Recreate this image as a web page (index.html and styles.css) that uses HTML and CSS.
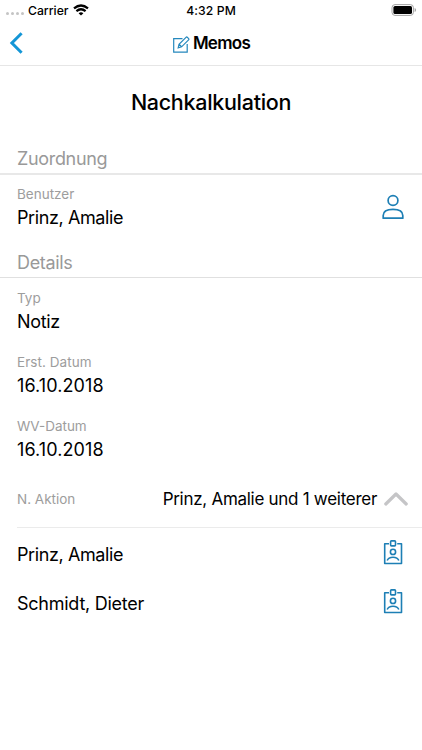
FILE: index.html
```
<!DOCTYPE html>
<html lang="de">
<head>
<meta charset="utf-8">
<title>Memos</title>
<link rel="stylesheet" href="styles.css">
</head>
<body>
<div class="status">
  <div class="carrier">
    <span class="dots"><i></i><i></i><i></i><i></i></span>
    <span class="carrier-name">Carrier</span>
    <svg class="wifi" width="16" height="12" viewBox="0 0 16 12" fill="none" stroke="#000" stroke-width="2.3"><path d="M1 4.3Q8-1.4 15 4.3"/><path d="M3.4 7.1Q8 3.5 12.6 7.1"/><path d="M8 11.6L5.6 9.2Q8 7.2 10.4 9.2Z" fill="#000" stroke="none"/></svg>
  </div>
  <span class="time">4:32 PM</span>
  <svg class="battery" width="26" height="12" viewBox="0 0 26 12"><rect x="1" y=".6" width="21.4" height="10.8" rx="3" fill="none" stroke="#a3a3a3"/><rect x="2.4" y="2" width="18.6" height="8" rx="1.6"/><path d="M23.6 4v4q1.5-.6 1.5-2t-1.5-2z" fill="#a3a3a3"/></svg>
</div>
<header class="nav">
  <svg class="back" width="14" height="22" viewBox="0 0 14 22" fill="none" stroke="#1496d6" stroke-width="3"><path d="M12.6 1.3L2.9 11l9.7 9.7"/></svg>
  <div class="nav-title">
    <svg width="17" height="17" viewBox="0 0 17 17" fill="none" stroke="#2588bd" stroke-width="1.2"><path d="M9.5 2.6H.7v13.5h13.5V8"/><path d="M5.2 11.8l.8-3.5 7-7q.6-.6 1.3 0l1.3 1.3q.6.6 0 1.2l-7 7zM6 8.3l2.6 2.5"/></svg>
    <span>Memos</span>
  </div>
</header>
<main>
  <h1>Nachkalkulation</h1>
  <h2 class="section first">Zuordnung</h2>
  <div class="field user">
    <div><div class="label benutzer">Benutzer</div><div class="value name">Prinz, Amalie</div></div>
    <svg width="22" height="26" viewBox="0 0 22 26" fill="none" stroke="#1d7fb5" stroke-width="1.7"><circle cx="11" cy="6.5" r="4.9"/><path d="M1.2 24.2V21.5C1.2 17.5 5 15.3 11 15.3s9.8 2.2 9.8 6.2v2.7z" stroke-linejoin="round"/></svg>
  </div>
  <h2 class="section second">Details</h2>
  <div class="field"><div class="label">Typ</div><div class="value notiz">Notiz</div></div>
  <div class="field"><div class="label erst">Erst. Datum</div><div class="value date">16.10.2018</div></div>
  <div class="field"><div class="label wv">WV-Datum</div><div class="value date">16.10.2018</div></div>
  <div class="action">
    <span class="label aktion">N. Aktion</span>
    <span class="value summary">Prinz, Amalie und 1 weiterer</span>
    <svg width="24" height="14" viewBox="0 0 24 14" fill="none" stroke="#c5c5c7" stroke-width="3.2" stroke-linecap="round" stroke-linejoin="round"><path d="M1.8 12L12 2l10.2 10"/></svg>
  </div>
  <div class="person"><span class="value name">Prinz, Amalie</span>
    <svg width="20" height="26" viewBox="0 0 20 26" fill="none" stroke="#1d7fb5" stroke-width="1.6" stroke-linejoin="round"><path d="M6 3.8H1.7v19.7h16.8V3.8h-4.3"/><rect x="7.6" y=".9" width="4.9" height="5" rx=".8"/><circle cx="10" cy="11.9" r="2.6"/><path d="M4.2 20.6q1.2-3.3 5.8-3.3t5.8 3.3"/></svg></div>
  <div class="person"><span class="value schmidt">Schmidt, Dieter</span>
    <svg width="20" height="26" viewBox="0 0 20 26" fill="none" stroke="#1d7fb5" stroke-width="1.6" stroke-linejoin="round"><path d="M6 3.8H1.7v19.7h16.8V3.8h-4.3"/><rect x="7.6" y=".9" width="4.9" height="5" rx=".8"/><circle cx="10" cy="11.9" r="2.6"/><path d="M4.2 20.6q1.2-3.3 5.8-3.3t5.8 3.3"/></svg></div>
</main>
</body>
</html>
```
FILE: styles.css
```
* { box-sizing: border-box; }
body { margin: 0; height: 750px; overflow: hidden; background: #fff; color: #000; font-family: Inter, "Liberation Sans", sans-serif; white-space: nowrap; }
svg { display: block; flex: none; }
.status { height: 22px; display: grid; grid-template-columns: 1fr auto 1fr; align-items: center; padding: 0 5px 2px 6px; font-size: 12.2px; letter-spacing: .1px; font-weight: 500; }
.carrier { display: flex; align-items: center; }
.carrier-name { letter-spacing: 0; }
.dots { display: flex; gap: 1.7px; padding-top: 7px; width: 22px; }
.dots i { width: 3.2px; height: 3.2px; border-radius: 50%; background: #c4c4c4; }
.wifi { margin-left: 4px; }
.time { position: relative; left: -.5px; }
.battery { justify-self: end; }
.nav { height: 44px; border-bottom: 1px solid #e6e6e6; display: grid; grid-template-columns: 1fr auto 1fr; align-items: center; padding: 0 9px 2px; }
.nav-title { display: flex; align-items: center; gap: 3px; padding-left: 1px; font-size: 17px; font-weight: 600; letter-spacing: -.7px; }
.nav-title svg { margin-top: 3px; }
h1 { margin: 0; height: 74px; line-height: 73px; text-align: center; font-size: 21.5px; font-weight: 500; letter-spacing: -.3px; }
.section { margin: 0; padding-left: 17px; border-bottom: 1px solid #e0e0e0; color: #999; font-size: 18px; font-weight: 400; line-height: 30px; letter-spacing: -.33px; }
.first { height: 35px; padding-top: 4px; border-bottom: 2px solid #e8e8e8; }
.second { height: 34px; padding-top: 4px; }
.field { height: 64px; padding: 10px 19px 0 17px; }
.user { height: 69px; padding-top: 9px; display: flex; justify-content: space-between; }
.user svg { margin: 10px -1px 0 0; }
.label { color: #9d9d9d; font-size: 13.5px; line-height: 20px; }
.erst { letter-spacing: .06px; }
.value { font-size: 18px; line-height: 25px; }
.field .value { margin-top: 1px; }
.name { letter-spacing: -.4px; }
.notiz { letter-spacing: -.35px; }
.date { letter-spacing: .1px; }
.schmidt { letter-spacing: -.25px; }
.action { height: 58px; margin-left: 17px; border-bottom: 1px solid #ebebeb; display: flex; align-items: center; padding: 1px 14px 0 0; }
.summary { margin-left: auto; margin-right: 7px; font-size: 17px; letter-spacing: -.28px; }
.person { height: 49px; display: flex; align-items: center; justify-content: space-between; padding: 3px 19px 0 17px; }
.person svg { margin-top: -3px; }
```
